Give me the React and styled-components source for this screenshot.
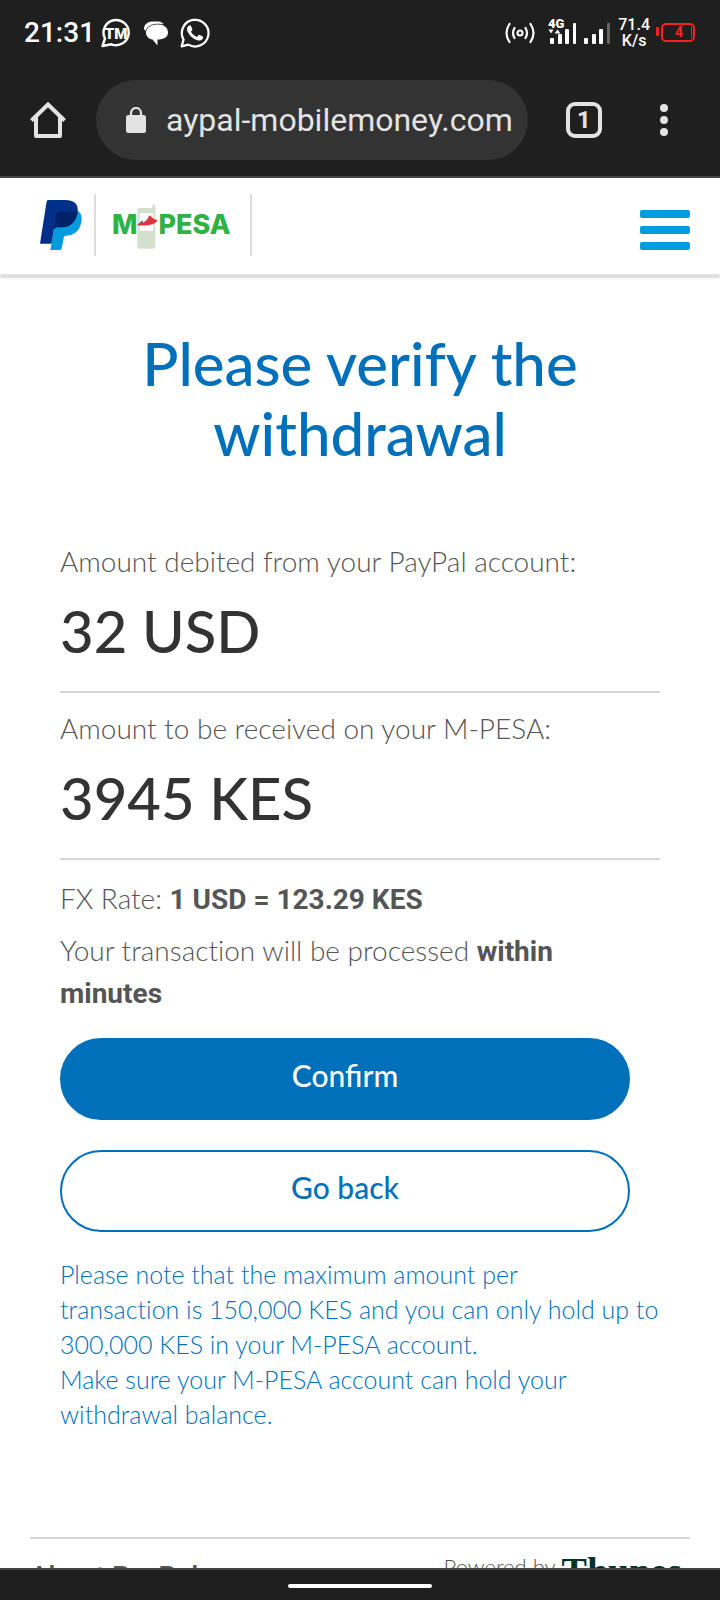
import React from 'react';
import styled, { createGlobalStyle, css } from 'styled-components';

const GlobalStyle = createGlobalStyle`
  *, *::before, *::after { box-sizing: border-box; }
  body { margin: 0; background: #fff; font-family: Lato, "Open Sans", sans-serif; color: #555; }
  h1, p, dl, dt, dd { margin: 0; }
  button, input { font: inherit; color: inherit; padding: 0; border: 0; background: none; }
  svg { display: block; flex: none; }
`;

const Screen = styled.div`
  display: flex;
  flex-direction: column;
  height: 100vh;
  overflow: hidden;
`;

const Chrome = styled.div`
  flex: none;
  background: #1f1f1f;
  border-bottom: 2px solid #444;
  color: #e3e3e3;
  font-family: Roboto, sans-serif;
`;

const StatusBar = styled.div`
  display: flex;
  align-items: center;
  justify-content: space-between;
  height: 64px;
  padding: 2px 24px 0;
  color: #fff;
`;

const StatusGroup = styled.div`
  display: flex;
  align-items: center;
  gap: ${(p) => p.$gap}px;
`;

const Clock = styled.time`
  font-size: 28px;
  line-height: 32px;
  font-weight: 500;
`;

const NetSpeed = styled.span`
  font-size: 16px;
  line-height: 16px;
  font-weight: 500;
  text-align: center;
`;

const AddressBar = styled.div`
  display: flex;
  align-items: center;
  height: 112px;
  padding: 0 44px 0 28px;
`;

const IconButton = styled.button`
  display: grid;
  place-items: center;
  flex: none;
  width: ${(p) => p.$width || 40}px;
  height: 40px;
`;

const UrlField = styled.label`
  display: flex;
  align-items: center;
  flex: 1;
  min-width: 0;
  gap: 20px;
  height: 80px;
  margin: 0 38px 0 28px;
  padding: 0 10px 0 30px;
  border-radius: 40px;
  background: #333;
`;

const UrlInput = styled.input`
  flex: 1;
  min-width: 0;
  height: 40px;
  font-size: 32px;
  line-height: 40px;
  outline: none;
`;

const TabCount = styled.button`
  flex: none;
  width: 36px;
  height: 36px;
  margin-right: 50px;
  border: 4px solid #e3e3e3;
  border-radius: 9px;
  font-size: 24px;
  line-height: 28px;
  font-weight: 700;
`;

const Page = styled.div`
  flex: 1;
  min-height: 0;
  overflow: hidden;
`;

const SiteHeader = styled.header`
  display: flex;
  align-items: center;
  justify-content: space-between;
  height: 98px;
  padding: 0 30px 2px 40px;
  border-bottom: 2px solid #e2e2e2;
  box-shadow: 0 1px 3px rgba(0, 0, 0, 0.25);
`;

const Brand = styled.a`
  display: flex;
  align-items: center;
  text-decoration: none;
`;

const Divider = styled.span`
  width: 2px;
  height: 62px;
  background: #ddd;
`;

const Mpesa = styled.span`
  display: flex;
  align-items: center;
  margin: 0 19px 0 16px;
  color: #2fb143;
  font: 800 27px/32px Inter, sans-serif;
`;

const Hamburger = styled.button`
  display: flex;
  flex-direction: column;
  gap: 8px;
  width: 50px;
  margin-top: 10px;
`;

const HamburgerBar = styled.span`
  height: 8px;
  border-radius: 2px;
  background: #009cde;
`;

const Content = styled.main`
  padding: 52px 60px 0;
`;

const Title = styled.h1`
  color: #0070ba;
  font-size: 60px;
  line-height: 70px;
  font-weight: 500;
  text-align: center;
`;

const Amounts = styled.dl`
  padding-top: 58px;
`;

const AmountRow = styled.div`
  height: 167px;
  padding-top: 15px;
  border-bottom: 2px solid #d5d5d5;
`;

const AmountLabel = styled.dt`
  font-size: 28px;
  line-height: 40px;
  font-weight: 300;
`;

const AmountValue = styled.dd`
  padding-top: 16px;
  color: #333;
  font-size: 58px;
  line-height: 68px;
  font-weight: 500;
`;

const Detail = styled.p`
  padding-top: ${(p) => p.$top}px;
  font-size: 28px;
  line-height: 42px;
  font-weight: 300;
  font-variant-ligatures: none;
`;

const Strong = styled.strong`
  font-family: Roboto, sans-serif;
  font-weight: 700;
  line-height: 1;
`;

const Actions = styled.div`
  display: flex;
  flex-direction: column;
  gap: 30px;
  padding: 25px 30px 0 0;
`;

const ActionButton = styled.button`
  height: 82px;
  padding-bottom: 8px;
  border: 2px solid #0070ba;
  border-radius: 41px;
  font-size: 30px;
  line-height: 40px;
  font-weight: 500;
  ${(p) =>
    p.$primary
      ? css`
          background: #0070ba;
          color: #fff;
        `
      : css`
          background: #fff;
          color: #0070ba;
        `}
`;

const Note = styled.p`
  padding-top: 25px;
  color: #0070ba;
  font-size: 25px;
  line-height: 35px;
  font-weight: 300;
  font-variant-ligatures: none;
`;

const SiteFooter = styled.footer`
  display: flex;
  justify-content: space-between;
  margin: 105px 30px 0;
  padding: 14px 8px 0 0;
  border-top: 2px solid #d5d5d5;
`;

const FooterLink = styled.a`
  padding-top: 6px;
  color: #555;
  font: 500 28px/36px Roboto, sans-serif;
  text-decoration: none;
`;

const Powered = styled.span`
  display: flex;
  align-items: flex-start;
  gap: 6px;
  font-size: 22px;
  line-height: 28px;
  font-weight: 300;
`;

const Partner = styled.strong`
  color: #00332a;
  font: 700 38px/36px "Liberation Serif", serif;
`;

const NavBar = styled.div`
  display: flex;
  justify-content: center;
  flex: none;
  height: 32px;
  padding-top: 14px;
  border-top: 2px solid #444;
  background: #1f1f1f;
`;

const NavHandle = styled.span`
  width: 20%;
  height: 4px;
  border-radius: 2px;
  background: #fff;
`;

function TmIcon() {
  return (
    <svg width="30" height="30" viewBox="0 0 30 30" fill="none">
      <path d="M1.500 28 L4 20.500 A12.600 12.600 0 1 1 10.500 26.300 Z" stroke="#fff" strokeWidth="2.400" strokeLinejoin="round" />
      <text x="15" y="20.500" fill="#fff" fontFamily="Roboto" fontWeight="900" fontSize="15" textAnchor="middle">TM</text>
    </svg>
  );
}

function ChatIcon() {
  return (
    <svg width="26" height="26" viewBox="0 0 26 26">
      <path d="M1 9 C1 4 5 1.500 10 1.500 H15 C18 1.500 20 3 21 4.500 C12 3 5 4 2.500 11 Z" fill="#fff" />
      <path d="M13 4 C20 4 25 7 25 12.500 C25 17 21 19.500 14.500 19.500 V25.500 L9.500 19.500 C5.500 19 3 16 3 12.500 C3 7.500 7 4 13 4Z" fill="#fff" />
      <path d="M3 10.500 C5.500 5 12 3 21 4.700" fill="none" stroke="#1f1f1f" strokeWidth="0.7" />
    </svg>
  );
}

function WhatsAppIcon() {
  return (
    <svg width="32" height="32" viewBox="0 0 24 24" fill="#fff">
      <path d="M17.472 14.382c-.297-.149-1.758-.867-2.030-.967-.273-.099-.471-.148-.670.150-.197.297-.767.966-.940 1.164-.173.199-.347.223-.644.075-.297-.150-1.255-.463-2.390-1.475-.883-.788-1.480-1.761-1.653-2.059-.173-.297-.018-.458.130-.606.134-.133.298-.347.446-.520.149-.174.198-.298.298-.497.099-.198.050-.371-.025-.520-.075-.149-.669-1.612-.916-2.207-.242-.579-.487-.500-.669-.510-.173-.008-.371-.010-.570-.010-.198 0-.520.074-.792.372-.272.297-1.040 1.016-1.040 2.479 0 1.462 1.065 2.875 1.213 3.074.149.198 2.096 3.200 5.077 4.487.709.306 1.262.489 1.694.625.712.227 1.360.195 1.871.118.571-.085 1.758-.719 2.006-1.413.248-.694.248-1.289.173-1.413-.074-.124-.272-.198-.570-.347" />
      <path d="M2 22 L3.400 17 A10 10 0 1 1 7 20.700 Z" fill="none" stroke="#fff" strokeWidth="1.700" strokeLinejoin="round" />
    </svg>
  );
}

function HotspotIcon() {
  return (
    <svg width="30" height="22" viewBox="0 0 30 22" fill="none" stroke="#fff" strokeWidth="2.200" strokeLinecap="round">
      <circle cx="15" cy="11" r="2.500" />
      <path d="M9.500 6 Q6.500 11 9.500 16 M20.500 6 Q23.500 11 20.500 16 M4.500 2 Q-1.500 11 4.500 20 M25.500 2 Q31.500 11 25.500 20" />
    </svg>
  );
}

function SignalIcon() {
  return (
    <svg width="64" height="30" viewBox="0 0 64 30" fill="#fff">
      <text x="0" y="10" fontFamily="Roboto" fontWeight="900" fontSize="13">4G</text>
      <path d="M0.500 11.500 H5.500 L3 15.500 Z M6.500 15.500 H12.500 L9.500 11.500 Z" />
      <rect x="2" y="20" width="4" height="6" rx="1" />
      <rect x="10" y="16" width="4" height="10" rx="1" />
      <rect x="17" y="11" width="4" height="15" rx="1" />
      <rect x="25" y="5" width="3" height="21" rx="1" />
      <rect x="36" y="20" width="4" height="6" rx="1" />
      <rect x="44" y="16" width="4" height="10" rx="1" />
      <rect x="51" y="11" width="4" height="15" rx="1" />
      <rect x="59" y="5" width="3" height="21" rx="1" fill="#666" />
    </svg>
  );
}

function BatteryIcon() {
  return (
    <svg width="40" height="20" viewBox="0 0 40 20" fill="none" stroke="#ff1f1f">
      <rect x="0" y="4" width="3" height="9" rx="1" fill="#ff1f1f" stroke="none" />
      <rect x="6" y="1" width="32" height="17" rx="4" strokeWidth="2" />
      <path d="M35.500 3.500 V14.500" strokeWidth="1" />
      <text x="23" y="14" fill="#ff1f1f" stroke="none" fontFamily="Roboto" fontWeight="700" fontSize="14" textAnchor="middle">4</text>
    </svg>
  );
}

function HomeIcon() {
  return (
    <svg width="36" height="36" viewBox="0 0 36 36" fill="none" stroke="#e3e3e3" strokeWidth="4" strokeLinejoin="round">
      <path d="M1.500 18.500 L18 2.500 L34.500 18.500" strokeLinejoin="miter" />
      <path d="M6 15 V34 H30 V15" />
    </svg>
  );
}

function LockIcon() {
  return (
    <svg width="20" height="26" viewBox="0 0 20 26">
      <rect x="0" y="8" width="20" height="18" rx="2.500" fill="#e3e3e3" />
      <path d="M5 9 V6 A5 5 0 0 1 15 6 V9" fill="none" stroke="#e3e3e3" strokeWidth="2.200" />
    </svg>
  );
}

function DotsIcon() {
  return (
    <svg width="8" height="32" viewBox="0 0 8 32" fill="#e3e3e3">
      <circle cx="4" cy="4" r="4" />
      <circle cx="4" cy="16" r="4" />
      <circle cx="4" cy="28" r="4" />
    </svg>
  );
}

function PayPalLogo() {
  return (
    <svg width="42" height="50" viewBox="0 0 126 150" role="img" aria-label="PayPal">
      <path d="M113 32 C124 39 127 50 124 66 C119 93 103 106 79 107 C74 107 72 109 71 114 L65 146 Q64 150 60 150 H31 L43 80 Z" fill="#009cde" />
      <path d="M20 4 Q21 0 26 0 H75 C102 0 116 12 113 34 C110 66 92 82 61 82 H51 Q43 82 41 91 L35 129 Q34 131 31 131 H0 Z" fill="#003087" />
      <path d="M113 32 C109 66 92 82 61 82 H51 Q45 82 42 88 L50 40 Q51 35 57 35 H95 Q106 35 112 32 Z" fill="#012169" />
    </svg>
  );
}

function PhoneLogo() {
  return (
    <svg width="21" height="50" viewBox="0 -12 63 150">
      <path d="M1 18 Q1 12 8 12 H46 V4 Q50 -2 55 4 V126 Q55 134 48 134 H8 Q1 134 1 126 Z" fill="#d5dfce" />
      <rect x="8" y="27" width="41" height="53" rx="3" fill="#fff" />
      <path d="M0 62 C15 56 31 54 36 35 Q40 34 44 40 Q50 46 62 49 C54 62 33 67 0 64 Z" fill="#df3340" />
      <path d="M3 61 L16 49 L18 57 Z" fill="#555" />
    </svg>
  );
}

export default function App() {
  return (
    <Screen>
      <GlobalStyle />
      <Chrome>
        <StatusBar>
          <StatusGroup $gap={12}>
            <StatusGroup $gap={6}>
              <Clock>21:31</Clock>
              <TmIcon />
            </StatusGroup>
            <StatusGroup $gap={10}>
              <ChatIcon />
              <WhatsAppIcon />
            </StatusGroup>
          </StatusGroup>
          <StatusGroup $gap={6}>
            <StatusGroup $gap={13}>
              <HotspotIcon />
              <SignalIcon />
            </StatusGroup>
            <NetSpeed>71.4<br />K/s</NetSpeed>
            <BatteryIcon />
          </StatusGroup>
        </StatusBar>
        <AddressBar>
          <IconButton aria-label="Home"><HomeIcon /></IconButton>
          <UrlField>
            <LockIcon />
            <UrlInput aria-label="Address" readOnly value="aypal-mobilemoney.com" />
          </UrlField>
          <TabCount aria-label="Open tabs">1</TabCount>
          <IconButton $width={24} aria-label="More options"><DotsIcon /></IconButton>
        </AddressBar>
      </Chrome>

      <Page>
        <SiteHeader>
          <Brand href="#home">
            <StatusGroup $gap={12}>
              <PayPalLogo />
              <Divider />
            </StatusGroup>
            <Mpesa>M<PhoneLogo />PESA</Mpesa>
            <Divider />
          </Brand>
          <Hamburger aria-label="Menu">
            <HamburgerBar />
            <HamburgerBar />
            <HamburgerBar />
          </Hamburger>
        </SiteHeader>

        <Content>
          <Title>Please verify the withdrawal</Title>
          <Amounts>
            <AmountRow>
              <AmountLabel>Amount debited from your PayPal account:</AmountLabel>
              <AmountValue>32 USD</AmountValue>
            </AmountRow>
            <AmountRow>
              <AmountLabel>Amount to be received on your M-PESA:</AmountLabel>
              <AmountValue>3945 KES</AmountValue>
            </AmountRow>
          </Amounts>
          <Detail $top={17}>FX Rate: <Strong>1 USD = 123.29 KES</Strong></Detail>
          <Detail $top={10}>Your transaction will be processed <Strong>within minutes</Strong></Detail>
          <Actions>
            <ActionButton $primary>Confirm</ActionButton>
            <ActionButton>Go back</ActionButton>
          </Actions>
          <Note>
            Please note that the maximum amount per
            <br />
            transaction is 150,000 KES and you can only hold up to 300,000 KES in your M-PESA account.
            <br />
            Make sure your M-PESA account can hold your withdrawal balance.
          </Note>
        </Content>

        <SiteFooter>
          <FooterLink href="#about">About PayPal</FooterLink>
          <Powered>Powered by <Partner>Thunes</Partner></Powered>
        </SiteFooter>
      </Page>

      <NavBar><NavHandle /></NavBar>
    </Screen>
  );
}
